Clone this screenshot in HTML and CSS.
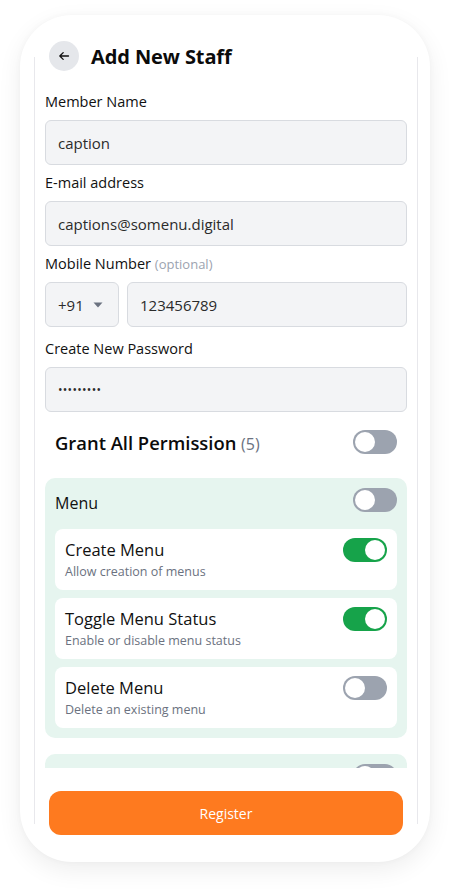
FILE: index.html
```html
<!DOCTYPE html>
<html>
<head>
<meta charset="utf-8">
<link rel="stylesheet" href="styles.css">
</head>
<body>
<div class="phone">
  <div class="header">
    <div class="back">
      <svg width="12" height="12" viewBox="0 0 12 12"><path d="M10.5 6H1.8M5.2 2.6L1.8 6l3.4 3.4" fill="none" stroke="#111" stroke-width="1.3" stroke-linecap="round" stroke-linejoin="round"/></svg>
    </div>
    <h1 class="title">Add New Staff</h1>
  </div>
  <div class="screen">
    <div class="scroll">
      <div class="field">
        <label class="label">Member Name</label>
        <div class="input">caption</div>
      </div>
      <div class="field">
        <label class="label">E-mail address</label>
        <div class="input">captions@somenu.digital</div>
      </div>
      <div class="field field-mobile">
        <label class="label">Mobile Number <span class="opt">(optional)</span></label>
        <div class="phone-row">
          <div class="input code">+91 <svg class="caret" width="10" height="6" viewBox="0 0 10 6"><path d="M0.5 0.5h9L5 5.5z" fill="#6b7280"/></svg></div>
          <div class="input num">123456789</div>
        </div>
      </div>
      <div class="field">
        <label class="label">Create New Password</label>
        <div class="input pwd">•••••••••</div>
      </div>

      <div class="grant">
        <div class="grant-title">Grant All Permission <span class="count">(5)</span></div>
        <div class="toggle"><span class="knob"></span></div>
      </div>

      <div class="group">
        <div class="group-head">
          <div class="group-title">Menu</div>
          <div class="toggle"><span class="knob"></span></div>
        </div>
        <div class="perm">
          <div class="perm-text">
            <div class="perm-title">Create Menu</div>
            <div class="perm-sub">Allow creation of menus</div>
          </div>
          <div class="toggle on"><span class="knob"></span></div>
        </div>
        <div class="perm">
          <div class="perm-text">
            <div class="perm-title">Toggle Menu Status</div>
            <div class="perm-sub">Enable or disable menu status</div>
          </div>
          <div class="toggle on"><span class="knob"></span></div>
        </div>
        <div class="perm">
          <div class="perm-text">
            <div class="perm-title">Delete Menu</div>
            <div class="perm-sub">Delete an existing menu</div>
          </div>
          <div class="toggle"><span class="knob"></span></div>
        </div>
      </div>

      <div class="group group-next">
        <div class="group-head">
          <div class="group-title"></div>
          <div class="toggle"><span class="knob"></span></div>
        </div>
      </div>
    </div>
    <div class="footer">
      <button class="register">Register</button>
    </div>
  </div>
</div>
</body>
</html>
```

FILE: styles.css
```css
* { box-sizing: border-box; }
html, body { margin: 0; padding: 0; }
body {
  background: #ffffff;
  font-family: "Open Sans", "Noto Sans", sans-serif;
  color: #111;
  width: 456px;
  height: 892px;
  overflow: hidden;
}
.phone {
  margin: 15px 0 0 20px;
  width: 410px;
  height: 847px;
  background: #fff;
  border-radius: 52px;
  box-shadow: 0 8px 24px rgba(0, 0, 0, 0.07), 0 0 6px rgba(0, 0, 0, 0.03);
  padding-top: 26px;
}
.header {
  display: flex;
  align-items: center;
  height: 30px;
  padding-left: 29px;
  position: relative;
  z-index: 1;
}
.back {
  width: 30px;
  height: 30px;
  border-radius: 50%;
  background: #e5e7eb;
  display: flex;
  align-items: center;
  justify-content: center;
}
.title {
  margin: 0 0 0 12px;
  font-size: 20px;
  font-weight: 700;
  color: #0b0b0b;
  letter-spacing: -0.1px;
}
.screen {
  margin: -14px 0 0 14px;
  width: 384px;
  height: 767px;
  border-left: 1px solid #e8e8ec;
  border-right: 1px solid #e8e8ec;
  display: flex;
  flex-direction: column;
}
.scroll {
  flex: none;
  height: 711px;
  overflow: hidden;
  padding: 35px 10px 0 10px;
}
.field { margin-bottom: 8px; }
.field-mobile { margin-bottom: 12px; }
.label {
  display: block;
  height: 20px;
  line-height: 20px;
  font-size: 14.5px;
  font-weight: 500;
  color: #111;
  margin-bottom: 8px;
}
.opt { color: #9ca3af; font-weight: 400; font-size: 13px; }
.input {
  height: 45px;
  background: #f3f4f6;
  border: 1px solid #d8dbe0;
  border-radius: 6px;
  padding: 0 12px;
  display: flex;
  align-items: center;
  font-size: 15px;
  color: #2b2b2b;
}
.phone-row { display: flex; gap: 8px; }
.code { width: 74px; flex: none; gap: 9px; }
.caret { margin-top: 1px; }
.num { flex: 1; }
.pwd { font-size: 12px; letter-spacing: 0.3px; }
.grant {
  margin-top: 18px;
  height: 24px;
  padding: 0 10px;
  display: flex;
  align-items: center;
  justify-content: space-between;
}
.grant-title { font-size: 18.4px; font-weight: 600; color: #0b0b0b; }
.count { font-size: 16px; color: #6b7280; font-weight: 500; }
.toggle {
  width: 44px;
  height: 24px;
  border-radius: 12px;
  background: #9ca3af;
  padding: 2px;
  flex: none;
  display: flex;
}
.knob {
  width: 20px;
  height: 20px;
  border-radius: 50%;
  background: #fff;
}
.toggle.on { background: #16a34a; justify-content: flex-end; }
.group {
  margin-top: 24px;
  background: #e6f5ef;
  border-radius: 10px;
  padding: 10px 10px 10px;
  display: flex;
  flex-direction: column;
  gap: 8px;
}
.group-next { margin-top: 16px; }
.group-head {
  display: flex;
  align-items: center;
  justify-content: space-between;
  height: 24px;
  margin-bottom: 9px;
}
.group-title { font-size: 16px; color: #111; padding-top: 5px; }
.perm {
  background: #fff;
  border-radius: 8px;
  height: 61px;
  padding: 9px 10px 0 10px;
  display: flex;
  justify-content: space-between;
  align-items: flex-start;
}
.perm-title { font-size: 16.5px; line-height: 24px; color: #111; }
.perm-sub { font-size: 12.5px; line-height: 19px; color: #6b7280; }
.footer {
  padding: 23px 14px 0;
}
.register {
  display: block;
  width: 100%;
  height: 44px;
  border: none;
  border-radius: 12px;
  background: #fe7a1f;
  color: #fff;
  font-family: inherit;
  font-size: 14px;
  font-weight: 400;
}
```
